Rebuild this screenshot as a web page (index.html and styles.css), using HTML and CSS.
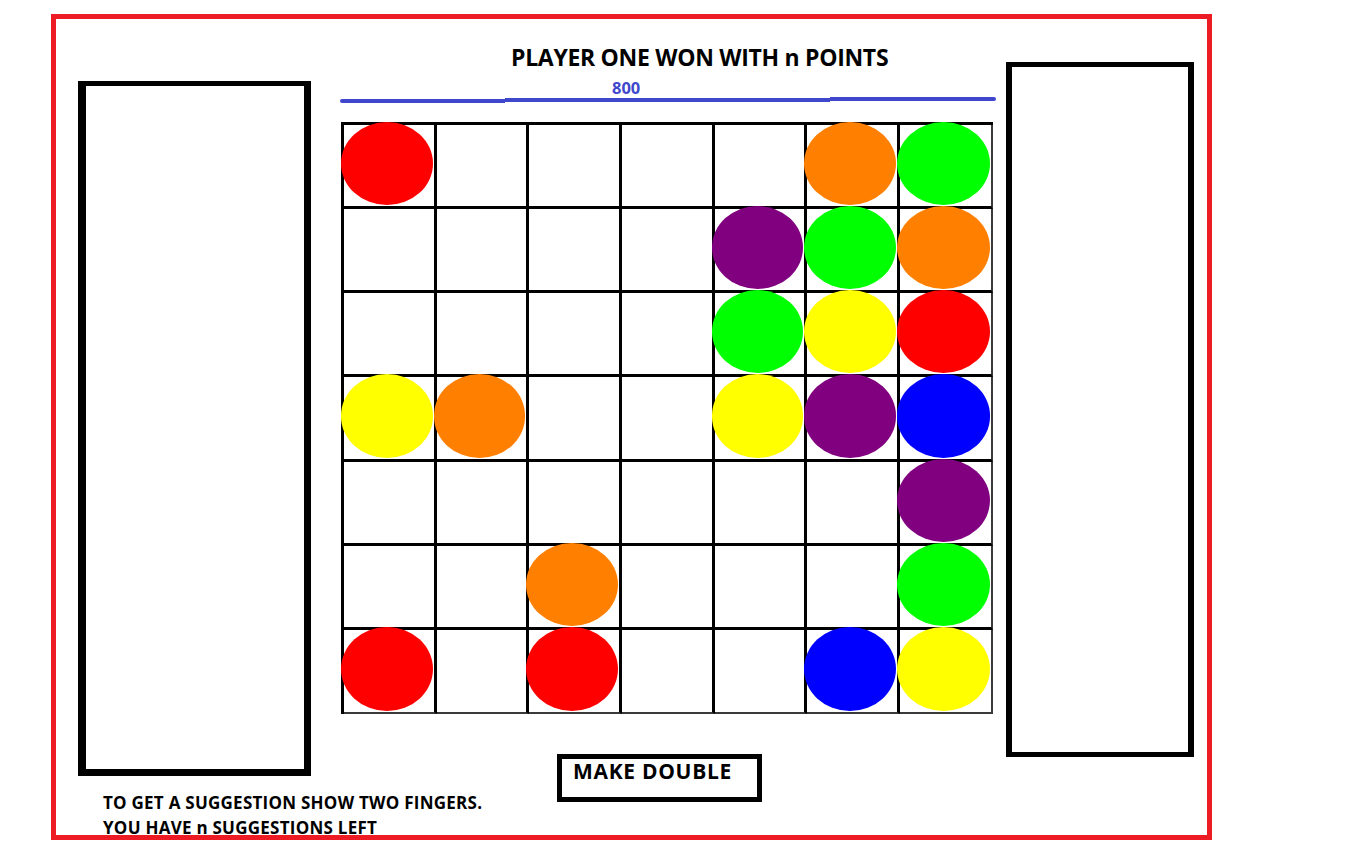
FILE: index.html
```html
<!DOCTYPE html>
<html>
<head>
<meta charset="utf-8">
<link rel="stylesheet" href="styles.css">
</head>
<body>
<div class="frame">
  <div class="left-col">
    <div class="panel panel-left"></div>
    <div class="hint">
      <div>TO GET A SUGGESTION SHOW TWO FINGERS.</div>
      <div>YOU HAVE n SUGGESTIONS LEFT</div>
    </div>
  </div>
  <div class="center-col">
    <div class="title">PLAYER ONE WON WITH n POINTS</div>
    <div class="score">800</div>
    <div class="score-line">
      <span class="seg seg-a"></span><span class="seg seg-b"></span><span class="seg seg-c"></span>
    </div>
    <div class="board">
      <div class="cell"><i class="piece red"></i></div><div class="cell"></div><div class="cell"></div><div class="cell"></div><div class="cell"></div><div class="cell"><i class="piece orange"></i></div><div class="cell"><i class="piece green"></i></div>
      <div class="cell"></div><div class="cell"></div><div class="cell"></div><div class="cell"></div><div class="cell"><i class="piece purple"></i></div><div class="cell"><i class="piece green"></i></div><div class="cell"><i class="piece orange"></i></div>
      <div class="cell"></div><div class="cell"></div><div class="cell"></div><div class="cell"></div><div class="cell"><i class="piece green"></i></div><div class="cell"><i class="piece yellow"></i></div><div class="cell"><i class="piece red"></i></div>
      <div class="cell"><i class="piece yellow"></i></div><div class="cell"><i class="piece orange"></i></div><div class="cell"></div><div class="cell"></div><div class="cell"><i class="piece yellow"></i></div><div class="cell"><i class="piece purple"></i></div><div class="cell"><i class="piece blue"></i></div>
      <div class="cell"></div><div class="cell"></div><div class="cell"></div><div class="cell"></div><div class="cell"></div><div class="cell"></div><div class="cell"><i class="piece purple"></i></div>
      <div class="cell"></div><div class="cell"></div><div class="cell"><i class="piece orange"></i></div><div class="cell"></div><div class="cell"></div><div class="cell"></div><div class="cell"><i class="piece green"></i></div>
      <div class="cell"><i class="piece red"></i></div><div class="cell"></div><div class="cell"><i class="piece red"></i></div><div class="cell"></div><div class="cell"></div><div class="cell"><i class="piece blue"></i></div><div class="cell"><i class="piece yellow"></i></div>
    </div>
    <div class="double-btn">MAKE DOUBLE</div>
  </div>
  <div class="right-col">
    <div class="panel panel-right"></div>
  </div>
</div>
</body>
</html>
```
FILE: styles.css
```css
* { box-sizing: border-box; }
html, body { margin: 0; padding: 0; background: #fff; }
body {
  font-family: "Open Sans", "Liberation Sans", sans-serif;
  font-weight: 700;
  color: #000;
  width: 1352px;
  height: 855px;
  overflow: hidden;
}
.frame {
  margin: 14px 0 0 51px;
  width: 1161px;
  height: 826px;
  border: 5px solid #ed1c24;
  display: flex;
  align-items: flex-start;
}
.left-col {
  width: 233px;
  margin: 62px 0 0 22px;
  flex: none;
}
.panel { border: 5px solid #000; background: #fff; }
.panel-left {
  width: 233px;
  height: 695px;
  border-width: 5px 7px 7px 8px;
}
.hint {
  margin: 14px 0 0 25px;
  font-size: 17px;
  line-height: 25px;
  letter-spacing: 0.25px;
  white-space: nowrap;
}
.center-col {
  width: 656px;
  margin: 23px 0 0 29px;
  flex: none;
}
.title {
  font-size: 23px;
  line-height: 30px;
  letter-spacing: -0.3px;
  padding-left: 171px;
  white-space: nowrap;
}
.score {
  margin-top: 7px;
  padding-left: 272px;
  font-size: 16.5px;
  line-height: 18px;
  color: #3f48cc;
}
.score-line {
  display: flex;
  align-items: flex-start;
  height: 6px;
}
.seg { display: block; height: 4px; background: #3f48cc; }
.seg-a { width: 165px; margin-top: 2px; border-radius: 2px 0 0 2px; }
.seg-b { width: 325px; margin-top: 1px; }
.seg-c { width: 166px; margin-top: 0; border-radius: 0 2px 2px 0; }
.board {
  margin: 19px 0 0 1px;
  display: grid;
  grid-template-columns: repeat(7, 92.7px);
  grid-template-rows: repeat(7, 84.14px);
  border-left: 3px solid #000;
  border-top: 3px solid #000;
  width: 652px;
}
.cell {
  border-right: 3px solid #000;
  border-bottom: 3px solid #000;
}
.cell:nth-child(7n) { border-right: 2px solid #3a3a3a; }
.cell:nth-child(n+43) { border-bottom: 2px solid #3a3a3a; }
.piece {
  display: block;
  margin: -3px 0 0 -3px;
  width: calc(100% + 2px);
  height: calc(100% + 2px);
  border-radius: 50%;
}
.red { background: #ff0000; }
.orange { background: #ff7f00; }
.green { background: #00ff00; }
.purple { background: #800080; }
.yellow { background: #ffff00; }
.blue { background: #0000ff; }
.double-btn {
  margin: 40px 0 0 217px;
  width: 205px;
  height: 48px;
  border: 5px solid #000;
  padding: 0 0 0 11px;
  font-size: 21px;
  line-height: 24px;
  letter-spacing: 0.7px;
  white-space: nowrap;
}
.right-col {
  margin: 43px 0 0 10px;
  flex: none;
}
.panel-right {
  width: 188px;
  height: 695px;
  border-width: 5px 6px 5px 6px;
}
```
